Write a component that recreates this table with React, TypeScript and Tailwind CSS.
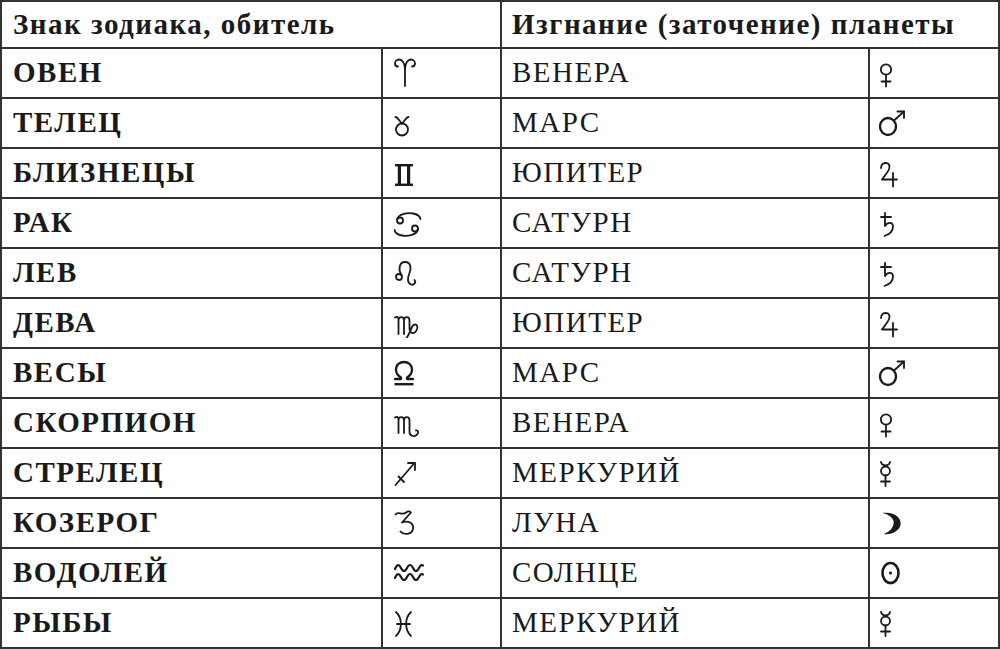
import React from "react";

type G = keyof typeof glyphs;

// astro glyphs drawn in a 30x30 box, baseline at y=28
const glyphs = {
    aries: (
        <path d="M11 28 V11 C11 5 8 1.5 5 1.5 C2.5 1.5 1 3.5 1 5.5 C1 7.5 2.5 8.5 4 8.5 M11 11 C11 5 14 1.5 17 1.5 C19.5 1.5 21 3.5 21 5.5 C21 7.5 19.5 8.5 18 8.5" />
    ),
    taurus: (
        <>
            <path d="M1.5 9 C4 9 5 13 8 15.5 C11 13 12 9 14.5 9" />
            <circle cx="8" cy="21.5" r="6" />
        </>
    ),
    gemini: (
        <g fill="currentColor" stroke="none">
            <rect x="1" y="6" width="18" height="2.4" />
            <rect x="1" y="25.6" width="18" height="2.4" />
            <rect x="3.8" y="7" width="3.2" height="20" />
            <rect x="13" y="7" width="3.2" height="20" />
        </g>
    ),
    cancer: (
        <>
            <circle cx="6" cy="12.5" r="3" />
            <path d="M3.2 11.5 C4 6 13 4.5 19 5.5 C23 6.2 26 8.5 26.5 11" />
            <circle cx="21" cy="20.5" r="3" />
            <path d="M23.8 21.5 C23 27 14 28.5 8 27.5 C4 26.8 1 24.5 0.5 22" />
        </>
    ),
    leo: (
        <>
            <circle cx="5" cy="19" r="3" />
            <path d="M7.6 17.5 C4 12 5 4 11 4 C17 4 17.5 10 15.5 15 C13.5 20 13 25 17 26.5 C20 27.5 22.5 24.5 20.5 22" />
        </>
    ),
    virgo: (
        <path d="M1 9.5 C3 8 4.5 9 4.5 12 V26 M4.5 12.5 C4.5 8 10 8 10 12.5 V26 M10 12.5 C10 8 15.5 8 15.5 12.5 V20 C15.5 26 21 27 23 21 C24.5 16 20 15 18 19 C16 23 15 27 12.5 30" />
    ),
    libra: (
        <>
            <path
                strokeWidth="2.3"
                d="M1 21 H7 V19.5 C3.5 17.5 2 14.5 2 11.5 C2 6.5 6 4 10 4 C14 4 18 6.5 18 11.5 C18 14.5 16.5 17.5 13 19.5 V21 H19"
            />
            <rect x="0.5" y="25" width="19" height="2.4" fill="currentColor" stroke="none" />
        </>
    ),
    scorpio: (
        <path d="M1 9.5 C3 8 4.5 9 4.5 12 V25 M4.5 12.5 C4.5 8 10 8 10 12.5 V25 M10 12.5 C10 8 15.5 8 15.5 12.5 V24 C15.5 28 20 29 22.5 27 C25 25 24.5 22 22 22.5" />
    ),
    sagittarius: (
        <>
            <path d="M1.5 27 L20.5 5" />
            <path d="M14 5 H21 V12" />
            <path d="M4.5 18.5 L10 24" />
        </>
    ),
    capricorn: (
        <path d="M1.5 6.5 C4 2.5 8 8 12 4.5 C14 3 16 3 17 4.5 L8 14.5 C14 12 20 15 19 21 C18 26.5 10 27.5 6.5 23.5" />
    ),
    aquarius: (
        <>
            <path strokeWidth="2.2" d="M1 11 C3 6 5 6 7 10 C9 14 11 14 13 10 C15 6 17 6 19 10 C21 14 23 14 25 10 C26.5 7 28 6.5 29 7.5" />
            <path strokeWidth="2.2" d="M1 20 C3 15 5 15 7 19 C9 23 11 23 13 19 C15 15 17 15 19 19 C21 23 23 23 25 19 C26.5 16 28 15.5 29 16.5" />
        </>
    ),
    pisces: (
        <path d="M2 4 C8.5 10 8.5 22 2 28 M17 4 C10.5 10 10.5 22 17 28 M3 16 H16" />
    ),
    venus: (
        <>
            <circle cx="8" cy="11.5" r="5.2" />
            <path d="M8 16.7 V28.5 M3.5 23.5 H12.5" />
        </>
    ),
    mars: (
        <>
            <ellipse cx="10" cy="18.5" rx="8" ry="8.5" strokeWidth="2.4" />
            <path d="M16 12.5 L26 3.5" />
            <path d="M19.5 3.5 H26 V10" />
        </>
    ),
    jupiter: (
        <path d="M3 10 C3 6 6 4.5 9 5.2 C12 6 12.5 10 9.5 14 L4 21.5 H19 M15 15 V28.5" />
    ),
    saturn: (
        <path d="M3 9 H13 M7 5 V18 M7 18 C9 14 15 13.5 15 18.5 C15 23 11 26.5 6.5 28" />
    ),
    mercury: (
        <>
            <path d="M3 4 C4 8.5 11 8.5 12 4" />
            <circle cx="7.5" cy="13" r="4.5" />
            <path d="M7.5 17.5 V28 M3 23.5 H12" />
        </>
    ),
    moon: (
        <path
            fill="currentColor"
            stroke="none"
            d="M4 5 C16 3 24 10 22.5 17 C21 23 13 27.5 6 26 C13 23 16.5 18 15.5 13 C14.5 9 10 6 4 5 Z"
        />
    ),
    sun: (
        <>
            <ellipse cx="12.5" cy="15" rx="8" ry="10" strokeWidth="2.6" />
            <circle cx="12.5" cy="15" r="1.6" fill="currentColor" stroke="none" />
        </>
    ),
};

const Glyph = ({ name }: { name: G }) => (
    <svg
        width="30"
        height="30"
        viewBox="0 0 30 30"
        fill="none"
        stroke="currentColor"
        strokeWidth="1.8"
        strokeLinecap="round"
        strokeLinejoin="round"
    >
        {glyphs[name]}
    </svg>
);

const rows: [string, G, string, G][] = [
    ["ОВЕН", "aries", "ВЕНЕРА", "venus"],
    ["ТЕЛЕЦ", "taurus", "МАРС", "mars"],
    ["БЛИЗНЕЦЫ", "gemini", "ЮПИТЕР", "jupiter"],
    ["РАК", "cancer", "САТУРН", "saturn"],
    ["ЛЕВ", "leo", "САТУРН", "saturn"],
    ["ДЕВА", "virgo", "ЮПИТЕР", "jupiter"],
    ["ВЕСЫ", "libra", "МАРС", "mars"],
    ["СКОРПИОН", "scorpio", "ВЕНЕРА", "venus"],
    ["СТРЕЛЕЦ", "sagittarius", "МЕРКУРИЙ", "mercury"],
    ["КОЗЕРОГ", "capricorn", "ЛУНА", "moon"],
    ["ВОДОЛЕЙ", "aquarius", "СОЛНЦЕ", "sun"],
    ["РЫБЫ", "pisces", "МЕРКУРИЙ", "mercury"],
];

const App = () => {
    return (
        <div className="w-[1000px] h-[649px] bg-white overflow-hidden">
            <div className="grid grid-cols-[379px_117px_366px_128px] gap-[2px] p-[2px] bg-[#333] text-[#1a1a1a] font-['Liberation_Serif',serif] text-[29px] tracking-[1.5px]">
                <div className="col-span-2 h-[45px] bg-white flex items-center pl-[11px] font-bold">
                    Знак зодиака, обитель
                </div>
                <div className="col-span-2 h-[45px] bg-white flex items-center pl-[10px] font-bold">
                    Изгнание (заточение) планеты
                </div>
                {rows.map(([sign, glyph, planet, pglyph]) => (
                    <React.Fragment key={sign}>
                        <div className="h-[48px] bg-white flex items-center pl-[11px] font-bold">
                            {sign}
                        </div>
                        <div className="h-[48px] bg-white flex items-center pl-[11px]">
                            <Glyph name={glyph} />
                        </div>
                        <div className="h-[48px] bg-white flex items-center pl-[10px]">
                            {planet}
                        </div>
                        <div className="h-[48px] bg-white flex items-center pl-[8px]">
                            <Glyph name={pglyph} />
                        </div>
                    </React.Fragment>
                ))}
            </div>
        </div>
    );
};

export default App;
